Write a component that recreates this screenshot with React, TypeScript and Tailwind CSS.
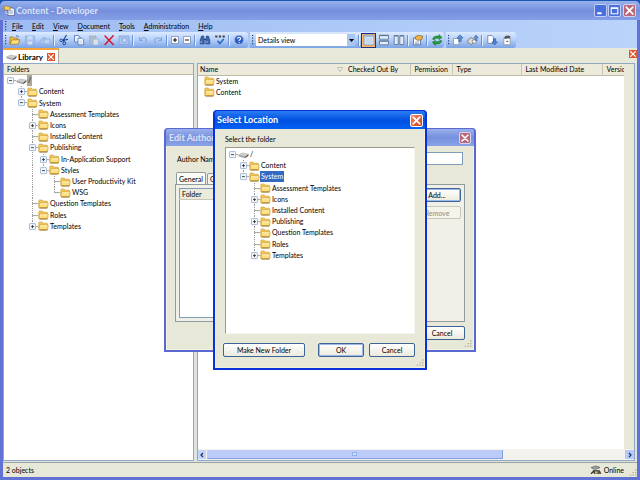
import { Fragment, useState } from 'react';
import type { ReactNode } from 'react';

type TreeItem = { name: string; more?: boolean; children?: TreeItem[] };

const libraryTree: TreeItem = {
  name: '/',
  children: [
    { name: 'Content', more: true },
    {
      name: 'System',
      children: [
        { name: 'Assessment Templates' },
        { name: 'Icons', more: true },
        { name: 'Installed Content' },
        {
          name: 'Publishing',
          children: [
            { name: 'In-Application Support', more: true },
            { name: 'Styles', children: [{ name: 'User Productivity Kit' }, { name: 'WSG' }] },
          ],
        },
        { name: 'Question Templates' },
        { name: 'Roles' },
        { name: 'Templates', more: true },
      ],
    },
  ],
};

const locationTree: TreeItem = {
  name: '/',
  children: [
    { name: 'Content', more: true },
    {
      name: 'System',
      children: [
        { name: 'Assessment Templates' },
        { name: 'Icons', more: true },
        { name: 'Installed Content' },
        { name: 'Publishing', more: true },
        { name: 'Question Templates' },
        { name: 'Roles' },
        { name: 'Templates', more: true },
      ],
    },
  ],
};

const menus = ['File', 'Edit', 'View', 'Document', 'Tools', 'Administration', 'Help'];

/* ---------- icons ---------- */

function FolderIcon() {
  return (
    <svg viewBox="0 0 11 10" className="h-[10px] w-[11px] shrink-0">
      <path d="M.8 8.4V1.9Q.8 1 1.7 1h2.5l1 1.2h3.5q.9 0 .9.9v5.4z" fill="#f3c755" stroke="#c79a3a" strokeWidth=".6" />
      <path d="M1.4 4.6q.1-.7.8-.7h7.5q.6 0 .5.7L9.6 8.2q-.1.7-.8.7H1.8q-.8 0-.8-.7z" fill="#fddf80" stroke="#c79a3a" strokeWidth=".6" />
      <path d="M2.2 4.8h7" stroke="#fff6cf" strokeWidth=".8" />
      <path d="M1.4 9h8" stroke="#8f6a1c" strokeWidth=".9" />
    </svg>
  );
}

function DriveIcon() {
  return (
    <svg viewBox="0 0 11 10" className="h-[10px] w-[11px] shrink-0">
      <path d="M.5 5 4.500 3l6 1.200-3.200 2.600z" fill="#cfcfcf" stroke="#a5a5a5" strokeWidth=".5" />
      <path d="M.5 5v1.3l6.8 2V6.8z" fill="#9b9b9b" />
      <path d="M10.5 4.2v1.4L7.3 8.3V6.8z" fill="#3c3c3c" />
    </svg>
  );
}

function XIcon() {
  return (
    <svg viewBox="0 0 10 10" className="h-full w-full">
      <path d="M2 2l6 6M8 2l-6 6" stroke="#fff" strokeWidth="1.6" strokeLinecap="round" />
    </svg>
  );
}

function Grip() {
  return (
    <svg viewBox="0 0 3 12" className="h-[12px] w-[3px] shrink-0">
      <path d="M1 1.5h1.2M1 4.2h1.2M1 6.9h1.2M1 9.6h1.2" stroke="#27417a" strokeWidth="1.2" />
    </svg>
  );
}

function ResizeGrip() {
  return (
    <svg viewBox="0 0 8 8" className="h-[8px] w-[8px] shrink-0">
      <path
        d="M6 1h1.4M6 3.6h1.4M3.4 3.6h1.4M6 6.2h1.4M3.4 6.2h1.4M.8 6.2h1.4"
        stroke="#b3b09c"
        strokeWidth="1.3"
      />
    </svg>
  );
}

const toolIcons: Record<string, ReactNode> = {
  Open: (
    <>
      <path d="M1 10V3h3l1 1h3.5v2" fill="#f3c04f" stroke="#9a6d16" strokeWidth=".7" />
      <path d="M1 10.2 3 5.8h8L9 10.2z" fill="#ffdf7e" stroke="#9a6d16" strokeWidth=".7" />
      <path d="M7 2.2q2-1.4 3 1" fill="none" stroke="#3a66b3" strokeWidth=".8" />
    </>
  ),
  Save: (
    <>
      <path d="M1.5 2h9v8.5h-9z" fill="#a5c1ec" stroke="#8aa9dc" strokeWidth=".8" />
      <path d="M3.5 2h5v3.6h-5z" fill="#c9dbf6" />
      <path d="M4 7.5h4v3H4z" fill="#d4e2f8" />
    </>
  ),
  'Save All': (
    <>
      <path d="M1 7l4-4 2 1.5v5.5H1z" fill="#a9c4ed" stroke="#8aa9dc" strokeWidth=".7" />
      <path d="M5 5h6v5H5z" fill="#bdd2f3" stroke="#8aa9dc" strokeWidth=".7" />
    </>
  ),
  Cut: (
    <>
      <path d="M8.5 1 4.8 7M10 5.2 4.5 6.6" stroke="#16418f" strokeWidth="1.1" />
      <circle cx="3.2" cy="6.4" r="1.3" fill="none" stroke="#16418f" />
      <circle cx="6.3" cy="9.3" r="1.4" fill="none" stroke="#16418f" />
      <path d="M5.3 5.2 6 8" stroke="#16418f" />
    </>
  ),
  Copy: (
    <>
      <path d="M1.5 1.5h4l1.5 1.5v5H1.5z" fill="#eaf2ff" stroke="#476fb5" strokeWidth=".8" />
      <path d="M5 4.2h4l1.6 1.6v5H5z" fill="#fff" stroke="#476fb5" strokeWidth=".8" />
      <path d="M6.2 7h3.2M6.2 8.8h3.2" stroke="#8aa6d6" strokeWidth=".6" />
    </>
  ),
  Paste: (
    <>
      <path d="M1.5 2h6.5v8h-6.5z" fill="#b0bdc9" stroke="#9fb0c6" strokeWidth=".8" />
      <path d="M5 5h5.5v6H5z" fill="#d6e0ee" stroke="#9fb3d3" strokeWidth=".8" />
    </>
  ),
  Delete: <path d="M2 2l8.2 8.5M10.2 1.8 2 10.5" stroke="#d8152a" strokeWidth="1.5" strokeLinecap="round" />,
  Properties: (
    <>
      <path d="M1 2h10v8.5H1z" fill="#a9c3ec" stroke="#86a5da" strokeWidth=".8" />
      <circle cx="6.5" cy="6.2" r="2.4" fill="#c5d8f5" stroke="#86a5da" strokeWidth=".9" />
    </>
  ),
  Undo: <path d="M2.5 3v3.5H6M2.8 6.2q3-4 6-1.6 1.6 2-.8 4.4" fill="none" stroke="#85a8df" strokeWidth="1.1" />,
  Redo: <path d="M9.5 3v3.5H6M9.2 6.2q-3-4-6-1.6-1.6 2 .8 4.4" fill="none" stroke="#85a8df" strokeWidth="1.1" />,
  Expand: (
    <>
      <path d="M2.5 2.5h7v7h-7z" fill="#fff" stroke="#7b8fb5" strokeWidth=".8" />
      <path d="M4 6h4M6 4v4" stroke="#111" strokeWidth="1.1" />
    </>
  ),
  Collapse: (
    <>
      <path d="M2.5 2.5h7v7h-7z" fill="#fff" stroke="#7b8fb5" strokeWidth=".8" />
      <path d="M4 6h4" stroke="#111" strokeWidth="1.1" />
    </>
  ),
  Find: (
    <>
      <path d="M2.6 2h2l.6 3v5H1.2V6zM9.4 2h-2l-.6 3v5h4V6z" fill="#3b66ad" stroke="#1d3e7c" strokeWidth=".6" />
      <path d="M5 5.5h2" stroke="#1d3e7c" />
      <path d="M2.2 7v2.2M8 7v2.2" stroke="#b9d0f6" strokeWidth=".8" />
    </>
  ),
  Spelling: (
    <>
      <path d="M1.2 2.6h2.2M4.8 2.6H7M8.5 2.6h2.3" stroke="#444" strokeWidth="2" />
      <path d="M3.5 6.8 5.8 9.6 9.8 5" fill="none" stroke="#2f62c6" strokeWidth="1.5" />
    </>
  ),
  Help: (
    <>
      <circle cx="6" cy="6" r="4.8" fill="#2a5fce" stroke="#a9bbdc" strokeWidth="1.1" />
      <path d="M4.5 4.8q.1-1.6 1.6-1.6t1.5 1.4q0 .9-1.4 1.6v.7M6.2 8.2v1" fill="none" stroke="#fff" strokeWidth="1.1" />
    </>
  ),
  'Split Both': (
    <>
      <path d="M1 1h10v10H1z" fill="#d3e1f8" stroke="#8297b5" strokeWidth=".9" />
      <path d="M1.5 2.2h9" stroke="#8ea5c6" />
      <path d="M3 5h6M3 7h6M3 9h6" stroke="#a7bfe6" strokeWidth=".6" />
    </>
  ),
  'Split Rows': (
    <>
      <path d="M1.5 1.2h9v4h-9zM1.5 6.8h9v4h-9z" fill="#e3ecfa" stroke="#56708f" strokeWidth=".8" />
      <path d="M1.5 1.6h9M1.5 7.2h9" stroke="#56708f" />
    </>
  ),
  'Split Columns': (
    <>
      <path d="M1.2 1.5h4v9h-4zM6.8 1.5h4v9h-4z" fill="#e3ecfa" stroke="#56708f" strokeWidth=".8" />
      <path d="M1.2 2h4M6.8 2h4" stroke="#56708f" />
    </>
  ),
  'Property Sheet': (
    <>
      <path d="M1.5 4h7v6.8h-7z" fill="#fff" stroke="#4a628f" strokeWidth=".8" />
      <path d="M3 4.8q0-3 3.4-3.4l4.4.8-1 3.4-4 .8z" fill="#f0b44a" stroke="#8a5f18" strokeWidth=".7" />
      <path d="M3 8h4M3 9.4h4" stroke="#5b7bb5" strokeWidth=".6" />
    </>
  ),
  Refresh: (
    <>
      <path d="M1.5 5.2q1.2-3.4 4.8-3.2h2l-.3-1.5L11 3.6 8 5.6l.2-1.4H6q-2 0-2.6 1.4z" fill="#25a13a" stroke="#0e6420" strokeWidth=".5" />
      <path d="M10.8 6.8q-1.2 3.4-4.8 3.2H4l.3 1.5L1.3 8.4l3-2-.2 1.4h2.2q2 0 2.6-1.4z" fill="#25a13a" stroke="#0e6420" strokeWidth=".5" />
    </>
  ),
  'Check In': (
    <>
      <path d="M1.5 4.5h5.5v6.2h-5.5z" fill="#fff" stroke="#7d8ea8" strokeWidth=".8" />
      <path d="M8 .8 11 4H9.2v3.4H6.8V4H5z" fill="#5c92dc" stroke="#2c5ba5" strokeWidth=".6" />
    </>
  ),
  'Check In All': (
    <>
      <path d="M.8 6 4 3.6 7 5v3.4L4 10.6.8 8.6z" fill="#d9d9d9" stroke="#737373" strokeWidth=".8" />
      <circle cx="7.4" cy="7.4" r="2" fill="#efefef" stroke="#6c7484" strokeWidth=".7" />
      <path d="M9 1 11.2 3.6H10v3H8.2v-3H7z" fill="#5c92dc" stroke="#2c5ba5" strokeWidth=".5" />
    </>
  ),
  'Check Out': (
    <>
      <path d="M1.8 1.5h4l1.6 1.6v6.2H1.8z" fill="#fff" stroke="#66789a" strokeWidth=".8" />
      <path d="M8.6 11 5.8 8h1.7V4.8h2.2V8h1.7z" fill="#4b84d6" stroke="#24529c" strokeWidth=".6" />
    </>
  ),
  'Undo Check Out': (
    <>
      <path d="M2.8 4.2h6.4v6.6H2.8z" fill="#fff" stroke="#8492aa" strokeWidth=".8" />
      <path d="M3 3.6Q5.4.2 9.4 2.4l-.6 2.2-2-.6-2.2 1z" fill="#555" />
      <path d="M5.4 7.4h2" stroke="#444" />
    </>
  ),
};

function Tool({
  name,
  disabled,
  active,
  narrow,
}: {
  name: string;
  disabled?: boolean;
  active?: boolean;
  narrow?: boolean;
}) {
  let look = 'w-[15px]';
  if (narrow) look = 'w-[12px]';
  if (active) look = 'w-[15px] border border-[#1c2f8c] bg-[#fdb75a]';

  return (
    <button
      type="button"
      title={name}
      aria-label={name}
      disabled={disabled}
      className={`flex h-[15px] shrink-0 items-center justify-center ${look}`}
    >
      <svg viewBox="0 0 12 12" className="h-[12px] w-[12px]">
        {toolIcons[name]}
      </svg>
    </button>
  );
}

function Separator() {
  return <span className="mx-[1px] h-[11px] w-[2px] shrink-0 border-l border-[#6b93d8] bg-[#e3edfc]" />;
}

/* ---------- tree ---------- */

function Branch({ root, last, mark }: { root: boolean; last: boolean; mark: '+' | '-' | '' }) {
  return (
    <svg className="h-full w-[11px] shrink-0">
      {!root && <line x1="5.5" y1="0" x2="5.5" y2={last ? '50%' : '100%'} stroke="#9a9a9a" strokeDasharray="1 1" />}
      <line x1="5" y1="50%" x2="11" y2="50%" stroke="#8a8a8a" strokeWidth=".8" />
      {mark && (
        <svg y="50%" overflow="visible">
          <rect x="2.5" y="-3" width="6" height="6" rx=".6" fill="#f3f6fb" stroke="#9cb4d0" strokeWidth=".9" />
          <path d={mark === '+' ? 'M4 0h3M5.5-1.5v3' : 'M4 0h3'} stroke="#222" strokeWidth=".8" />
        </svg>
      )}
    </svg>
  );
}

function TreeNode({
  item,
  guides,
  last,
  selected,
  muted,
}: {
  item: TreeItem;
  guides: boolean[];
  last: boolean;
  selected: string;
  muted?: boolean;
}) {
  const root = item.name === '/';
  const isSelected = item.name === selected;

  let label = 'px-px leading-[11px]';
  if (isSelected) label += muted ? ' bg-[#aca899]' : ' bg-[#316ac5] text-white';

  return (
    <Fragment>
      <li className="flex items-center whitespace-nowrap">
        {guides.map((line, i) => (
          <svg key={i} className="h-full w-[11px] shrink-0">
            {line && <line x1="5.5" y1="0" x2="5.5" y2="100%" stroke="#9a9a9a" strokeDasharray="1 1" />}
          </svg>
        ))}
        <Branch root={root} last={last} mark={item.more ? '+' : item.children ? '-' : ''} />
        {root ? <DriveIcon /> : <FolderIcon />}
        <span className={label}>{item.name}</span>
      </li>
      {item.children?.map((child, i) => (
        <TreeNode
          key={child.name}
          item={child}
          guides={[...guides, !root && !last]}
          last={i === item.children!.length - 1}
          selected={selected}
          muted={muted}
        />
      ))}
    </Fragment>
  );
}

/* ---------- dialogs ---------- */

function DialogButton({ children, className }: { children: ReactNode; className: string }) {
  return (
    <button
      type="button"
      className={`flex h-[14px] items-center justify-center rounded-[2px] border border-[#3c6494] bg-linear-to-b from-white to-[#eceade] ${className}`}
    >
      {children}
    </button>
  );
}

function EditAuthorDialog() {
  return (
    <section
      aria-label="Edit Author"
      className="flex h-[224px] w-[312px] flex-col rounded-t-[4px] border-2 border-t border-[#5a68d2] bg-[#7a96df] [grid-area:1/1]"
    >
      <header className="flex h-[17px] shrink-0 items-center justify-between rounded-t-[3px] bg-linear-to-b from-[#9ab1ec] via-[#7690dd] to-[#8aa3e8] px-[3px]">
        <h2 className="text-[9px] leading-[12px] font-bold text-[#dbe3f8]">Edit Author</h2>
        <button
          type="button"
          aria-label="Close"
          className="h-[12px] w-[12px] rounded-[2px] border border-[#d9d4ee] bg-[#b86878]"
        >
          <XIcon />
        </button>
      </header>
      <div className="flex grow flex-col border border-t-0 border-[#f4f2e2] bg-[#e8e8d8] px-[8px] pb-px">
        <div className="flex items-center gap-[4px] px-[2px] pt-[6px]">
          <label htmlFor="author-name">Author Name:</label>
          <input id="author-name" type="text" className="h-[13px] min-w-0 grow border border-[#7f9db9] bg-white px-[2px]" />
        </div>
        <div className="flex items-end gap-[1px] px-[1px] pt-[7px]">
          <button type="button" className="h-[12px] rounded-t-[2px] border border-b-0 border-[#919b9c] bg-[#fbfbf8] px-[2px]">
            General
          </button>
          <button type="button" className="h-[11px] rounded-t-[2px] border border-b-0 border-[#919b9c] bg-[#f4f3ec] px-[2px]">
            Groups
          </button>
        </div>
        <div className="flex h-[138px] gap-[4px] border border-[#919b9c] bg-[#f1f0e8] p-[3px]">
          <table className="h-full grow border border-[#7f9db9] bg-white">
            <thead>
              <tr>
                <th className="h-[11px] border-b border-[#cbc7b8] bg-[#ebeadb] px-[2px] text-left font-normal">Folder</th>
              </tr>
            </thead>
            <tbody>
              <tr>
                <td />
              </tr>
            </tbody>
          </table>
          <div className="flex w-[48px] flex-col gap-[4px]">
            <DialogButton className="ring-1 ring-[#9db9ea] ring-inset">Add...</DialogButton>
            <button
              type="button"
              disabled
              className="flex h-[13px] items-center justify-center rounded-[2px] border border-[#c9c7ba] bg-[#f5f4ea] text-[#8d8b80]"
            >
              Remove
            </button>
          </div>
        </div>
        <div className="flex justify-end pt-[4px]">
          <DialogButton className="w-[46px]">Cancel</DialogButton>
        </div>
        <div className="-mr-[7px] mt-auto flex justify-end">
          <ResizeGrip />
        </div>
      </div>
    </section>
  );
}

function SelectLocationDialog() {
  return (
    <section
      role="dialog"
      aria-labelledby="select-location"
      className="flex h-[260px] w-[214px] flex-col rounded-t-[4px] border-2 border-t border-[#0831d9] bg-[#0855dd] [grid-area:1/1]"
    >
      <header className="flex h-[18px] shrink-0 items-center justify-between rounded-t-[3px] bg-linear-to-b from-[#2b7df5] via-[#0050e0] to-[#0560f5] px-[2px]">
        <h2 id="select-location" className="text-[9px] leading-[12px] font-bold text-white">
          Select Location
        </h2>
        <button
          type="button"
          aria-label="Close"
          className="h-[13px] w-[13px] rounded-[2px] border border-white bg-linear-to-br from-[#ee8a68] to-[#cf3a12]"
        >
          <XIcon />
        </button>
      </header>
      <div className="flex grow flex-col border border-t-0 border-[#f4f0d8] bg-[#e8e8d8] pl-[7px]">
        <p className="pt-[5px] pl-[2px] leading-[10px]">Select the folder</p>
        <div className="mt-[3px] mr-[9px] ml-[2px] h-[187px] border border-t-[#9d9a8c] border-r-[#f8f7ee] border-b-[#f8f7ee] border-l-[#9d9a8c] bg-white pt-px pl-px">
          <ul className="grid h-[112px] auto-rows-fr">
            <TreeNode item={locationTree} guides={[]} last selected="System" />
          </ul>
        </div>
        <div className="mt-[9px] mr-[9px] flex">
          <DialogButton className="w-[82px]">Make New Folder</DialogButton>
          <DialogButton className="ml-auto w-[46px] ring-1 ring-[#9db9ea] ring-inset">OK</DialogButton>
          <DialogButton className="ml-[5px] w-[46px]">Cancel</DialogButton>
        </div>
        <div className="mt-auto flex justify-end">
          <ResizeGrip />
        </div>
      </div>
    </section>
  );
}

/* ---------- main window ---------- */

function Toolbars() {
  const [view, setView] = useState('Details view');
  const bar =
    'flex h-[16px] items-center rounded-r-[3px] bg-linear-to-b from-[#dceafe] via-[#b3cef7] to-[#7ba3e4]';

  return (
    <div className="flex h-[16px] gap-[2px]">
      <div className={`${bar} w-[245px] pl-[1px]`}>
        <Grip />
        <Tool name="Open" />
        <Tool name="Save" disabled />
        <Tool name="Save All" disabled />
        <Separator />
        <Tool name="Cut" />
        <Tool name="Copy" />
        <Tool name="Paste" disabled />
        <Tool name="Delete" />
        <Tool name="Properties" disabled />
        <Separator />
        <Tool name="Undo" disabled />
        <Tool name="Redo" disabled />
        <Separator />
        <Tool name="Expand" narrow />
        <Tool name="Collapse" narrow />
        <Separator />
        <Tool name="Find" />
        <Tool name="Spelling" />
        <Separator />
        <Tool name="Help" />
      </div>
      <div className={`${bar} w-[194px] pl-[1px]`}>
        <Grip />
        <div className="mx-[2px] flex h-[12px] w-[100px] bg-white">
          <select
            aria-label="View"
            value={view}
            onChange={(e) => setView(e.target.value)}
            className="h-[12px] min-w-0 grow appearance-none bg-white pl-[2px] leading-[12px]"
          >
            <option>Details view</option>
            <option>Outline view</option>
          </select>
          <span className="flex w-[8px] items-center justify-center bg-[#a9c5f2]">
            <svg viewBox="0 0 5 3" className="h-[3px] w-[5px]">
              <path d="M0 0h5L2.5 3z" fill="#000" />
            </svg>
          </span>
        </div>
        <Separator />
        <Tool name="Split Both" active />
        <Tool name="Split Rows" />
        <Tool name="Split Columns" />
        <Separator />
        <Tool name="Property Sheet" />
        <Separator />
        <Tool name="Refresh" />
      </div>
      <div className={`${bar} w-[70px] pl-[1px]`}>
        <Grip />
        <Tool name="Check In" />
        <Tool name="Check In All" />
        <Separator />
        <Tool name="Check Out" />
        <Tool name="Undo Check Out" />
      </div>
    </div>
  );
}

function FileList() {
  const th = 'border-l border-[#cbc7b8] pl-[4px] text-left font-normal';
  return (
    <table className="w-full table-fixed border-collapse">
      <thead>
        <tr className="h-[11px] border-b border-[#bdb9a5] bg-[#ebeadb]">
          <th className="w-[148px] pl-[2px] text-left font-normal">
            <span className="flex items-center justify-between pr-[3px]">
              Name
              <svg viewBox="0 0 6 5" className="h-[5px] w-[6px]">
                <path d="M.5.5h5L3 4.5z" fill="#f6f5ee" stroke="#aca899" strokeWidth=".7" />
              </svg>
            </span>
          </th>
          <th className="w-[64px] pl-[2px] text-left font-normal">Checked Out By</th>
          <th className={`w-[42px] ${th}`}>Permission</th>
          <th className={`w-[69px] ${th}`}>Type</th>
          <th className={`w-[81px] ${th}`}>Last Modified Date</th>
          <th className={th}>Versic</th>
        </tr>
      </thead>
      <tbody>
        {['System', 'Content'].map((name) => (
          <tr key={name} className="h-[11px]">
            <td className="pl-[6px]" colSpan={6}>
              <span className="flex items-center gap-px">
                <FolderIcon />
                {name}
              </span>
            </td>
          </tr>
        ))}
      </tbody>
    </table>
  );
}

export default function App() {
  return (
    <div className="relative flex h-screen min-h-[480px] flex-col bg-[#1c56ae] pt-px font-['Lato',sans-serif] text-[7px] leading-[10px] text-black">
      <div className="flex grow flex-col overflow-hidden rounded-t-[5px] bg-[#6272d4] px-[3px] pb-[3px]">
        <header className="-mx-[3px] flex h-[19px] shrink-0 items-center bg-linear-to-b from-[#98b2ee] via-[#758fdc] to-[#849fe6] pr-[4px] pl-[4px]">
          <svg viewBox="0 0 11 11" className="h-[11px] w-[11px]">
            <path d="M4 3h5l1.5 1.5v6H4z" fill="#f4f6fb" stroke="#4d5f8a" strokeWidth=".7" />
            <path d="M.5 2.5V1h2l.6.6h3V5H.5z" fill="#f7d45c" stroke="#9a7420" strokeWidth=".6" />
            <path d="M5 6h4M5 8h4" stroke="#6e8dc7" strokeWidth=".8" />
            <path d="M2 6v2.5h1.6" fill="none" stroke="#e8eefc" strokeWidth=".8" />
          </svg>
          <h1 className="ml-[1px] text-[9px] leading-[12px] font-bold text-[#dbe3f8]">Content - Developer</h1>
          <div className="ml-auto flex gap-[1px]">
            <button type="button" aria-label="Minimize" className="h-[13px] w-[13px] rounded-[2px] border border-[#c3cef2] bg-[#4a6fdc]">
              <svg viewBox="0 0 10 10" className="h-full w-full">
                <path d="M2 7.5h4" stroke="#fff" strokeWidth="1.6" />
              </svg>
            </button>
            <button type="button" aria-label="Maximize" className="h-[13px] w-[13px] rounded-[2px] border border-[#c3cef2] bg-[#4a6fdc]">
              <svg viewBox="0 0 10 10" className="h-full w-full">
                <path d="M2 2.5h6v5.5H2zM2 3.2h6" fill="none" stroke="#fff" />
              </svg>
            </button>
            <button type="button" aria-label="Close" className="ml-[1px] h-[13px] w-[13px] rounded-[2px] border border-[#d9d4ee] bg-[#b86878]">
              <XIcon />
            </button>
          </div>
        </header>

        <div className="bg-linear-to-r from-[#9ebcf2] to-[#b9d3fa]">
          <nav className="flex h-[12px] items-center pl-[1px]">
            <Grip />
            <ul className="flex gap-[9px] pl-[5px]">
              {menus.map((menu) => (
                <li key={menu}>
                  <button type="button">
                    <span className="underline">{menu[0]}</span>
                    {menu.slice(1)}
                  </button>
                </li>
              ))}
            </ul>
          </nav>
          <Toolbars />
        </div>

        <div className="flex h-[15px] shrink-0 items-start justify-between bg-[#e8e8d8]">
          <div className="flex h-[15px] w-[56px] items-center gap-[1px] border-t-2 border-r border-t-[#f7a33a] border-r-[#aca899] bg-white px-[3px] font-bold">
            <DriveIcon />
            <span className="text-[8px]">Library</span>
            <button type="button" aria-label="Close tab" className="ml-auto h-[8px] w-[8px] bg-[#e2552c]">
              <XIcon />
            </button>
          </div>
          <button type="button" aria-label="Close pane" className="mt-[2px] h-[8px] w-[8px] bg-[#e2552c]">
            <XIcon />
          </button>
        </div>

        <main className="flex grow gap-[3px] bg-[#dfe3e0] pr-[2px] pb-px">
          <section className="flex w-[191px] shrink-0 flex-col border border-[#8fa9c4] bg-white">
            <h2 className="h-[11px] border-b border-[#bdb9a5] bg-[#ebeadb] pl-[3px]">Folders</h2>
            <ul className="grid h-[157px] auto-rows-fr pl-px">
              <TreeNode item={libraryTree} guides={[]} last selected="/" muted />
            </ul>
          </section>
          <section className="flex min-w-0 grow flex-col border border-[#8fa9c4] bg-[#e8e8d8]">
            <div className="mr-[10px] grow overflow-hidden bg-white">
              <FileList />
            </div>
            <div className="flex h-[11px] items-center bg-[#f3f2ec]">
              <button type="button" aria-label="Scroll left" className="flex h-[9px] w-[8px] items-center justify-center bg-[#c3d3fb]">
                <svg viewBox="0 0 6 6" className="h-[6px] w-[6px]">
                  <path d="M4 1 2 3l2 2" fill="none" stroke="#26345c" strokeWidth="1.2" />
                </svg>
              </button>
              <div className="ml-[1px] flex h-[9px] w-[68%] items-center justify-center rounded-[1px] border-r border-b border-[#7e9fe0] bg-[#bccbf7]">
                <span className="h-[4px] w-[5px] border border-[#93b0ee] bg-[#d5e0fc]" />
              </div>
              <button type="button" aria-label="Scroll right" className="ml-auto flex h-[9px] w-[9px] items-center justify-center bg-[#b3c9f8]">
                <svg viewBox="0 0 6 6" className="h-[6px] w-[6px]">
                  <path d="M2 1l2 2-2 2" fill="none" stroke="#26345c" strokeWidth="1.2" />
                </svg>
              </button>
            </div>
          </section>
        </main>

        <footer className="flex h-[15px] shrink-0 items-center border-t border-[#9aa4a4] bg-[#e8e8d8] pl-[3px]">
          <span>2 objects</span>
          <span className="ml-auto flex items-center gap-[2px]">
            <svg viewBox="0 0 12 10" className="h-[10px] w-[12px]">
              <path d="M1 2.5 6 1l4 1.5-5 2z" fill="#9ea6b0" stroke="#444" strokeWidth=".6" />
              <path d="M3 5.5h6.5l1.5 3H4z" fill="#50565e" stroke="#222" strokeWidth=".5" />
              <path d="M1 8.8 4 6" stroke="#333" strokeWidth="1.2" />
              <path d="M5 6.5h2.5v2H5z" fill="#f0b43c" />
            </svg>
            Online
          </span>
          <span className="ml-[5px] self-end">
            <ResizeGrip />
          </span>
        </footer>
      </div>

      <div className="absolute inset-0 grid place-items-center">
        <EditAuthorDialog />
        <SelectLocationDialog />
      </div>
    </div>
  );
}
